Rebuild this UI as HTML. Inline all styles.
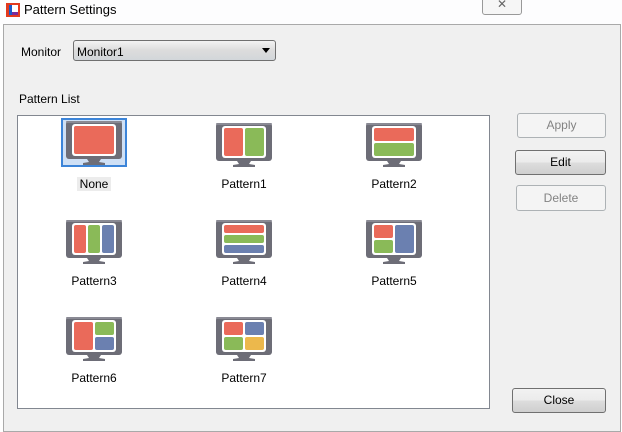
<!DOCTYPE html>
<html><head><style>
body{margin:0;width:622px;height:428px;background:#fff;font-family:"Liberation Sans",sans-serif;font-size:12px;color:#000;position:relative;overflow:hidden}
.a{position:absolute}
.btn{position:absolute;border:1px solid #707070;border-radius:3px;background:linear-gradient(#f2f2f2 0%,#ebebeb 50%,#dddddd 51%,#cfcfcf 100%);text-align:center;box-sizing:border-box}
.dis{border-color:#adb2b5;background:#f4f4f4;color:#838383}
.ic{position:absolute;width:56px;height:44px}
.lb{position:absolute;width:120px;text-align:center}
</style></head><body>
<div class="a" style="left:0;top:0;width:622px;height:24px;background:#fdfdfe"></div>
<div class="a" style="left:6px;top:3px;width:14px;height:14px;background:#e23a1e"></div>
<div class="a" style="left:9px;top:5px;width:9px;height:10px;background:#fff"></div>
<div class="a" style="left:9px;top:5px;width:3px;height:10px;background:#1a5ac8"></div>
<div class="a" style="left:12px;top:12px;width:6px;height:3px;background:#7a2a9a"></div>
<div class="a" style="left:24px;top:2px;font-size:13px">Pattern Settings</div>
<div class="a" style="left:482px;top:-4px;width:38px;height:17px;border:1px solid #999;border-radius:3px;background:#f6f6f6;text-align:center;color:#666;font-size:12px;line-height:15px">✕</div>
<div class="a" style="left:3px;top:24px;width:616px;height:406px;background:#f0f0f0;border:1px solid #a9a9a9"></div>
<div class="a" style="left:21px;top:45px">Monitor</div>
<div class="a" style="left:73px;top:40px;width:203px;height:21px;border:1px solid #707070;border-radius:3px;background:linear-gradient(#f3f3f3,#dcdcdc 50%,#d2d6da);box-sizing:border-box;padding:4px 0 0 3px">Monitor1</div>
<div class="a" style="left:262px;top:48px;width:0;height:0;border-left:4px solid transparent;border-right:4px solid transparent;border-top:5px solid #000"></div>
<div class="a" style="left:19px;top:92px">Pattern List</div>
<div class="a" style="left:17px;top:115px;width:473px;height:294px;background:#fff;border:1px solid #828790;box-sizing:border-box"></div>

<svg width="0" height="0" style="position:absolute"><defs>
<g id="m"><rect x="0" y="0" width="56" height="38" rx="3" fill="#6d6d77"/><rect x="0" y="0" width="56" height="2" rx="1" fill="#8a8a94"/><rect x="6" y="3" width="44" height="32" rx="3" fill="#fff"/><path d="M21 38 L23 41 L17 42 L17 44 L39 44 L39 42 L33 41 L35 38Z" fill="#6d6d77"/></g>
</defs></svg>

<div class="a" style="left:61px;top:118px;width:66px;height:49px;border:2px solid #3c84d8;box-sizing:border-box;background:#cfe0f5"></div>
<svg class="ic" style="left:66px;top:121px" viewBox="0 0 56 44"><use href="#m"/><rect x="8" y="5" width="40" height="28" rx="2" fill="#ea6a5a"/></svg>
<div class="a" style="left:77px;top:177px;width:34px;height:14px;background:#ececec"></div>
<div class="lb" style="left:34px;top:177px">None</div>

<svg class="ic" style="left:216px;top:123px" viewBox="0 0 56 44"><use href="#m"/><rect x="8" y="5" width="19" height="28" rx="2" fill="#ea6a5a"/><rect x="29" y="5" width="19" height="28" rx="2" fill="#8aba58"/></svg>
<div class="lb" style="left:184px;top:177px">Pattern1</div>
<svg class="ic" style="left:366px;top:123px" viewBox="0 0 56 44"><use href="#m"/><rect x="8" y="5" width="40" height="13" rx="2" fill="#ea6a5a"/><rect x="8" y="20" width="40" height="13" rx="2" fill="#8aba58"/></svg>
<div class="lb" style="left:334px;top:177px">Pattern2</div>

<svg class="ic" style="left:66px;top:220px" viewBox="0 0 56 44"><use href="#m"/><rect x="8" y="5" width="12" height="28" rx="2" fill="#ea6a5a"/><rect x="22" y="5" width="12" height="28" rx="2" fill="#8aba58"/><rect x="36" y="5" width="12" height="28" rx="2" fill="#6b80b0"/></svg>
<div class="lb" style="left:34px;top:274px">Pattern3</div>
<svg class="ic" style="left:216px;top:220px" viewBox="0 0 56 44"><use href="#m"/><rect x="8" y="5" width="40" height="8" rx="2" fill="#ea6a5a"/><rect x="8" y="15" width="40" height="8" rx="2" fill="#8aba58"/><rect x="8" y="25" width="40" height="8" rx="2" fill="#6b80b0"/></svg>
<div class="lb" style="left:184px;top:274px">Pattern4</div>
<svg class="ic" style="left:366px;top:220px" viewBox="0 0 56 44"><use href="#m"/><rect x="8" y="5" width="19" height="13" rx="2" fill="#ea6a5a"/><rect x="8" y="20" width="19" height="13" rx="2" fill="#8aba58"/><rect x="29" y="5" width="19" height="28" rx="2" fill="#6b80b0"/></svg>
<div class="lb" style="left:334px;top:274px">Pattern5</div>

<svg class="ic" style="left:66px;top:317px" viewBox="0 0 56 44"><use href="#m"/><rect x="8" y="5" width="19" height="28" rx="2" fill="#ea6a5a"/><rect x="29" y="5" width="19" height="13" rx="2" fill="#8aba58"/><rect x="29" y="20" width="19" height="13" rx="2" fill="#6b80b0"/></svg>
<div class="lb" style="left:34px;top:371px">Pattern6</div>
<svg class="ic" style="left:216px;top:317px" viewBox="0 0 56 44"><use href="#m"/><rect x="8" y="5" width="19" height="13" rx="2" fill="#ea6a5a"/><rect x="29" y="5" width="19" height="13" rx="2" fill="#6b80b0"/><rect x="8" y="20" width="19" height="13" rx="2" fill="#8aba58"/><rect x="29" y="20" width="19" height="13" rx="2" fill="#ecb84c"/></svg>
<div class="lb" style="left:184px;top:371px">Pattern7</div>

<div class="btn dis" style="left:517px;top:113px;width:89px;height:25px;line-height:23px">Apply</div>
<div class="btn" style="left:515px;top:150px;width:91px;height:25px;line-height:23px">Edit</div>
<div class="btn dis" style="left:516px;top:185px;width:90px;height:26px;line-height:24px">Delete</div>
<div class="btn" style="left:512px;top:388px;width:94px;height:25px;line-height:23px">Close</div>
</body></html>
